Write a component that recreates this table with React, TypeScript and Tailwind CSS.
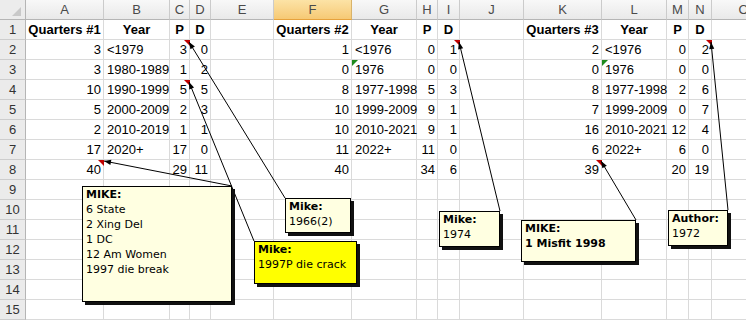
import React from 'react';

type Cell = string | number;

const letters = ['A', 'B', 'C', 'D', 'E', 'F', 'G', 'H', 'I', 'J', 'K', 'L', 'M', 'N', 'O'];

const tables: { c: number; h: string; d: Cell[][] }[] = [
  {
    c: 0,
    h: 'Quarters #1',
    d: [
      [3, '<1979', 3, 0],
      [3, '1980-1989', 1, 2],
      [10, '1990-1999', 5, 5],
      [5, '2000-2009', 2, 3],
      [2, '2010-2019', 1, 1],
      [17, '2020+', 17, 0],
      [40, '', 29, 11],
    ],
  },
  {
    c: 5,
    h: 'Quarters #2',
    d: [
      [1, '<1976', 0, 1],
      [0, '1976', 0, 0],
      [8, '1977-1998', 5, 3],
      [10, '1999-2009', 9, 1],
      [10, '2010-2021', 9, 1],
      [11, '2022+', 11, 0],
      [40, '', 34, 6],
    ],
  },
  {
    c: 10,
    h: 'Quarters #3',
    d: [
      [2, '<1976', 0, 2],
      [0, '1976', 0, 0],
      [8, '1977-1998', 2, 6],
      [7, '1999-2009', 0, 7],
      [16, '2010-2021', 12, 4],
      [6, '2022+', 6, 0],
      [39, '', 20, 19],
    ],
  },
];

const red: [number, number][] = [
  [2, 2],
  [4, 2],
  [8, 0],
  [2, 8],
  [2, 13],
  [8, 10],
];
const green: [number, number][] = [
  [3, 6],
  [3, 11],
];

function buildGrid(): Cell[][] {
  const g: Cell[][] = [];
  for (let r = 0; r < 15; r++) g.push(Array(15).fill(''));
  for (const t of tables) {
    g[0][t.c] = t.h;
    g[0][t.c + 1] = 'Year';
    g[0][t.c + 2] = 'P';
    g[0][t.c + 3] = 'D';
    t.d.forEach((row, i) => {
      row.forEach((v, j) => {
        g[i + 1][t.c + j] = v;
      });
    });
  }
  return g;
}

const arrows: [number, number, number, number][] = [
  [189, 42, 285, 198],
  [189, 82, 254, 241],
  [104, 161, 232, 186],
  [459, 42, 500, 211],
  [601, 161, 636, 220],
  [711, 42, 728, 210],
];

function head(x1: number, y1: number, x2: number, y2: number) {
  const dx = x2 - x1;
  const dy = y2 - y1;
  const L = Math.hypot(dx, dy);
  const ux = dx / L;
  const uy = dy / L;
  const len = 7;
  const w = 2.6;
  const bx = x1 + ux * len;
  const by = y1 + uy * len;
  return `${x1},${y1} ${bx - uy * w},${by + ux * w} ${bx + uy * w},${by - ux * w}`;
}

function DataCell({ v, r, c }: { v: Cell; r: number; c: number }) {
  const header = r === 1;
  const yearCol = c === 1 || c === 6 || c === 11;
  const align = header
    ? 'justify-center font-bold'
    : yearCol
    ? 'justify-start pl-[3px]'
    : 'justify-end pr-[2px]';
  const hasRed = red.some(([rr, cc]) => rr === r && cc === c);
  const hasGreen = green.some(([rr, cc]) => rr === r && cc === c);
  return (
    <div
      className={`relative flex items-center pt-[1px] whitespace-nowrap border-r border-b border-[#dadada] ${align}`}
    >
      {v === '' ? null : String(v)}
      {hasRed && (
        <span className="absolute top-0 right-[-1px] w-0 h-0 border-t-[6px] border-t-[#c00000] border-l-[6px] border-l-transparent" />
      )}
      {hasGreen && (
        <span className="absolute top-0 left-0 w-0 h-0 border-t-[6px] border-t-[#1e8b1e] border-r-[6px] border-r-transparent" />
      )}
    </div>
  );
}

function Comment({
  className,
  title,
  lines,
  bold,
}: {
  className: string;
  title: string;
  lines: string[];
  bold?: boolean;
}) {
  return (
    <div
      className={`absolute border border-black pl-[3px] font-['DejaVu_Sans',sans-serif] text-[11px] leading-[15px] text-black shadow-[3px_3px_0_#111] ${className}`}
    >
      <div className="font-bold">{title}</div>
      {lines.map((l, i) => (
        <div key={i} className={bold ? 'font-bold' : ''}>
          {l}
        </div>
      ))}
    </div>
  );
}

export default function App() {
  const g = buildGrid();
  return (
    <div className="relative w-[746px] h-[320px] overflow-hidden bg-white font-['Liberation_Sans',Arial,sans-serif] text-[13px] text-black">
      <div className="grid w-[776px] grid-cols-[26px_78px_66px_20px_21px_63px_78px_65px_21px_22px_64px_78px_65px_22px_23px_64px] grid-rows-[repeat(16,20px)]">
        <div className="relative bg-[#ececec] border-r border-b border-[#b5b5b5]">
          <span className="absolute bottom-[3px] right-[4px] w-0 h-0 border-b-[9px] border-b-[#c9c9c9] border-l-[9px] border-l-transparent" />
        </div>
        {letters.map((l) => (
          <div
            key={l}
            className={
              l === 'F'
                ? 'flex items-center justify-center bg-gradient-to-b from-[#fce3a6] to-[#f6c974] border-r border-b border-r-[#d9b36a] border-b-[#e6a23c] text-[#4a4a4a]'
                : 'flex items-center justify-center bg-gradient-to-b from-[#f8f8f8] to-[#e9e9e9] border-r border-b border-r-[#cbcbcb] border-b-[#b5b5b5] text-[#4a4a4a]'
            }
          >
            {l}
          </div>
        ))}
        {g.map((row, ri) => (
          <React.Fragment key={ri}>
            <div className="flex items-center justify-center bg-[#ebebeb] border-r border-b border-r-[#b5b5b5] border-b-[#cdcdcd] text-[#333333]">
              {ri + 1}
            </div>
            {row.map((v, ci) => (
              <DataCell key={ci} v={v} r={ri + 1} c={ci} />
            ))}
          </React.Fragment>
        ))}
      </div>

      <svg
        className="absolute left-0 top-0 pointer-events-none"
        width={746}
        height={320}
        viewBox="0 0 746 320"
      >
        {arrows.map(([x1, y1, x2, y2], i) => (
          <g key={i}>
            <line x1={x1} y1={y1} x2={x2} y2={y2} stroke="#000" strokeWidth={1} />
            <polygon points={head(x1, y1, x2, y2)} fill="#000" />
          </g>
        ))}
      </svg>

      <Comment
        className="left-[82px] top-[186px] w-[150px] h-[116px] bg-[#ffffe1]"
        title="MIKE:"
        lines={['6 State', '2 Xing Del', '1 DC', '12 Am Women', '1997 die break']}
      />
      <Comment
        className="left-[285px] top-[198px] w-[66px] h-[35px] bg-[#ffffe1]"
        title="Mike:"
        lines={['1966(2)']}
      />
      <Comment
        className="left-[254px] top-[241px] w-[103px] h-[43px] bg-[#ffff00]"
        title="Mike:"
        lines={['1997P die crack']}
      />
      <Comment
        className="left-[439px] top-[211px] w-[61px] h-[36px] bg-[#ffffe1]"
        title="Mike:"
        lines={['1974']}
      />
      <Comment
        className="left-[521px] top-[220px] w-[115px] h-[42px] bg-[#ffffe1]"
        title="MIKE:"
        lines={['1 Misfit 1998']}
        bold
      />
      <Comment
        className="left-[668px] top-[210px] w-[60px] h-[36px] bg-[#ffffe1]"
        title="Author:"
        lines={['1972']}
      />
    </div>
  );
}
